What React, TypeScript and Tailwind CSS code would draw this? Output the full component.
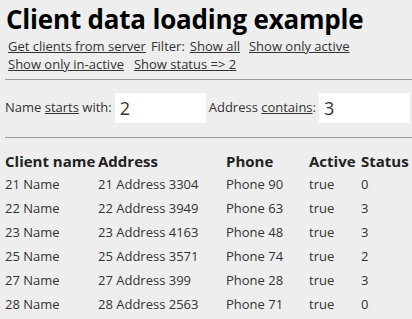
export default function App() {
  const rows = [
    ["21 Name", "21 Address 3304", "Phone 90", "true", "0"],
    ["22 Name", "22 Address 3949", "Phone 63", "true", "3"],
    ["23 Name", "23 Address 4163", "Phone 48", "true", "3"],
    ["25 Name", "25 Address 3571", "Phone 74", "true", "2"],
    ["27 Name", "27 Address 399", "Phone 28", "true", "3"],
    ["28 Name", "28 Address 2563", "Phone 71", "true", "0"],
  ];
  return (
    <div className="w-[412px] h-[319px] overflow-hidden bg-[#eeeeee] text-[#333333] pl-[5px]" style={{ fontFamily: '"Open Sans", sans-serif' }}>
      <h1 className="text-[26px] font-bold leading-[36px] text-black pt-[1px] pl-[1px] tracking-[-0.2px]">Client data loading example</h1>
      <div className="text-[13px] leading-[18px] pl-[3px] pr-[4px]">
        <a className="underline mr-[5px]">Get clients from server</a>
        <span className="mr-[5px]">Filter:</span>
        <a className="underline mr-[9px]">Show all</a>
        <a className="underline">Show only active</a>
        <br />
        <a className="underline mr-[10px]">Show only in-active</a>
        <a className="underline">Show status =&gt; 2</a>
      </div>
      <hr className="border-t border-[#999] mt-[6px]" />
      <div className="flex items-center text-[13px] h-[30px] mt-[13px] whitespace-nowrap">
        <span className="shrink-0">Name <span className="underline">starts</span> with:</span>
        <input className="shrink-0 ml-[3px] w-[91px] h-[30px] bg-white px-[5px] text-[18px] outline-none" defaultValue="2" />
        <span className="shrink-0 ml-[3px]">Address <span className="underline">contains</span>:</span>
        <input className="shrink-0 ml-[3px] w-[91px] h-[30px] bg-white px-[5px] text-[18px] outline-none" defaultValue="3" />
      </div>
      <hr className="border-t border-[#999] mt-[14px]" />
      <table className="mt-[11px] text-[13px] border-collapse">
        <thead>
          <tr className="h-[24px] font-bold text-[15px] text-[#222]">
            <td className="w-[93px] p-0">Client name</td>
            <td className="w-[128px] p-0">Address</td>
            <td className="w-[83px] p-0">Phone</td>
            <td className="w-[52px] p-0">Active</td>
            <td className="p-0">Status</td>
          </tr>
        </thead>
        <tbody>
          {rows.map((r) => (
            <tr key={r[0]} className="h-[24px]">
              {r.map((c, i) => (
                <td key={i} className="p-0">{c}</td>
              ))}
            </tr>
          ))}
        </tbody>
      </table>
    </div>
  );
}
